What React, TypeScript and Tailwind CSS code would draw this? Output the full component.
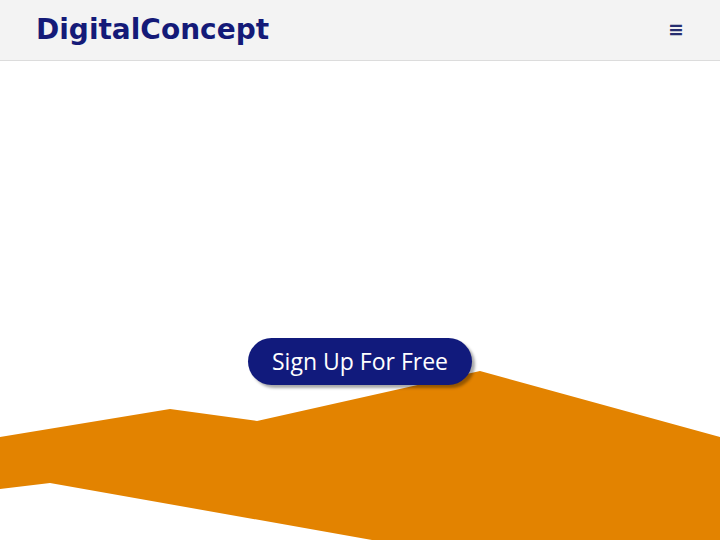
export default function App() {
  return (
    <div className="flex h-[540px] w-full flex-col overflow-hidden bg-white">
      <header className="flex h-[61px] shrink-0 items-center justify-between border-b border-[#dcdcdc] bg-[#f3f3f3] pl-9 pr-[36px]">
        <h1 className="font-['DejaVu_Sans',sans-serif] text-[28px] font-bold leading-none text-[#141a78]">
          DigitalConcept
        </h1>
        <button className="pb-[1px] font-['DejaVu_Sans',sans-serif] text-[19px] font-bold leading-none text-[#262e70]">
          ≡
        </button>
      </header>
      <main className="relative flex-1">
        <svg
          className="absolute inset-0 h-full w-full"
          viewBox="0 61 720 479"
          preserveAspectRatio="none"
        >
          <polygon
            points="0,437 170,409 257,421 480,371 720,437 720,540 372,540 50,483 0,489"
            fill="#e38300"
          />
        </svg>
        <div className="relative flex justify-center pt-[277px]">
          <button className="h-[47px] rounded-full bg-[#111a7c] px-6 font-['Open_Sans',sans-serif] text-[23px] leading-none text-white shadow-[3px_3px_3px_rgba(0,0,0,0.35)]">
            Sign Up For Free
          </button>
        </div>
      </main>
    </div>
  );
}
